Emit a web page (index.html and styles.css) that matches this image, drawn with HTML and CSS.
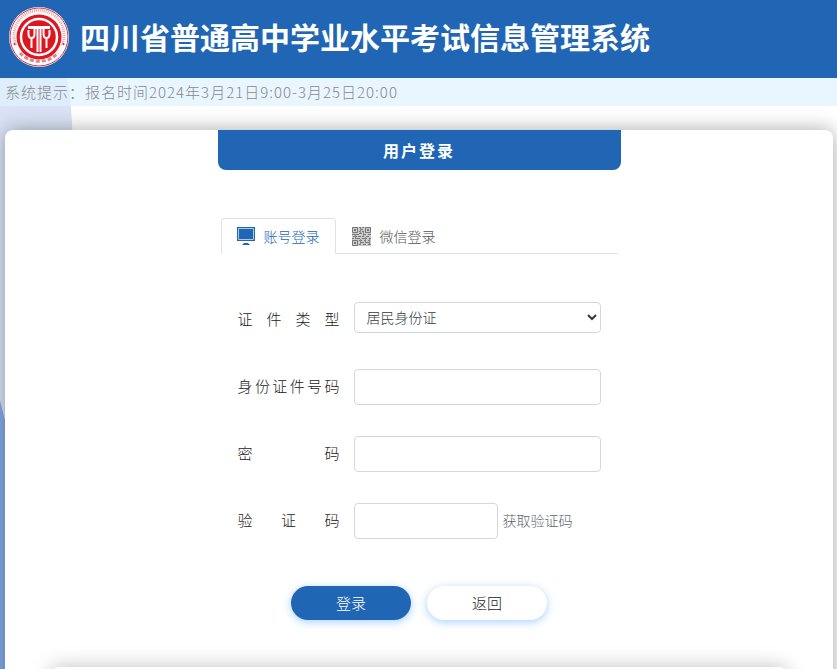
FILE: index.html
```html
<!DOCTYPE html>
<html lang="zh-CN">
<head>
    <meta charset="UTF-8">
    <meta name="viewport" content="width=device-width, initial-scale=1.0">
    <title>四川省普通高中学业水平考试信息管理系统</title>
    <link rel="stylesheet" href="styles.css">
</head>
<body>
    <svg class="bg-shape" width="80" height="900" viewBox="0 0 80 900" aria-hidden="true">
        <path d="M0 0H67Q74 30 74 140V900H0Z" fill="#dae3f6"/>
        <path d="M0 322Q3 335 10 362V900H0Z" fill="#84abea"/>
    </svg>
    <header class="header">
        <svg class="logo" width="60" height="60" viewBox="0 0 60 60" role="img" aria-label="四川省教育考试院">
            <circle cx="30" cy="30" r="30" fill="#fff"/>
            <circle cx="30" cy="30" r="29" fill="none" stroke="#e0303a" stroke-width="1"/>
            <path d="M7 38A25 25 0 1 1 53 38" fill="none" stroke="#eca0a6" stroke-width="3" stroke-dasharray="1 1"/>
            <path d="M11 46A26 26 0 0 0 49 46" fill="none" stroke="#e2848b" stroke-width="3" stroke-dasharray="4 2"/>
            <circle cx="5.500" cy="37" r="1" fill="#d9202b"/>
            <circle cx="54.500" cy="37" r="1" fill="#d9202b"/>
            <circle cx="30" cy="30" r="22.500" fill="#dd1620"/>
            <circle cx="30" cy="30" r="18" fill="none" stroke="#fff" stroke-width="2.500"/>
            <path d="M19 20.500H41" fill="none" stroke="#fff" stroke-width="3"/>
            <path d="M19.500 23V27Q19.500 31 22.500 31Q25.500 31 25.500 27V21M22.500 31V41M40.500 23V27Q40.500 31 37.500 31Q34.500 31 34.500 27V21M37.500 31V41M28.500 21V45M31.500 21V45" fill="none" stroke="#fff" stroke-width="2"/>
        </svg>
        <h1>四川省普通高中学业水平考试信息管理系统</h1>
    </header>
    <div class="notice">系统提示：报名时间2024年3月21日9:00-3月25日20:00</div>
    <main class="card">
        <div class="login">
            <h2>用户登录</h2>
            <nav class="tabs">
                <a href="#account" class="tab active">
                    <svg width="18" height="18" viewBox="0 0 18 18" aria-hidden="true">
                        <path d="M0 0H18V14H0Z" fill="#2066b5"/>
                        <path d="M1.500 1.500H16.500V12.500H1.500Z" fill="none" stroke="#a9c8ea" stroke-width="1"/>
                        <path d="M7 16H11L13 18H5Z" fill="#2066b5"/>
                    </svg>
                    账号登录
                </a>
                <a href="#wechat" class="tab">
                    <svg width="19" height="19" viewBox="0 0 19 19" aria-hidden="true" fill="none" stroke="#777">
                        <path d="M0 0H19V19H0Z" fill="#ccc" stroke="none"/>
                        <path d="M.5 .5H5.500V5.500H.5ZM13.500 .5H18.500V5.500H13.500ZM.5 13.500H5.500V18.500H.5Z"/>
                        <path d="M2 3H4M15 3H17M2 16H4" stroke-width="2"/>
                        <path d="M7 .5H9M10 .5H12M8 2.500H11M7 4.500H8M10 4.500H12M7 6.500H10M0 7.500H3M4 7.500H7M11 7.500H14M16 7.500H19M1 9.500H5M6 9.500H9M10 9.500H12M14 9.500H17M0 11.500H2M4 11.500H8M10 11.500H15M17 11.500H19M7 13.500H10M12 13.500H14M16 13.500H18M8 15.500H12M14 15.500H17M7 17.500H9M11 17.500H14M16 17.500H19"/>
                        <path d="M8.500 1V6M11.500 5V9M3.500 7V12M13.500 10V16M8.500 12V18M17.500 12V17" stroke="#888"/>
                    </svg>
                    微信登录
                </a>
            </nav>
            <form class="form">
                <div class="row">
                    <label for="idType">证件类型</label>
                    <select id="idType">
                        <option>居民身份证</option>
                    </select>
                </div>
                <div class="row">
                    <label for="idNumber">身份证件号码</label>
                    <input type="text" id="idNumber">
                </div>
                <div class="row">
                    <label for="password">密码</label>
                    <input type="password" id="password">
                </div>
                <div class="row">
                    <label for="captcha">验证码</label>
                    <input type="text" id="captcha" class="short">
                    <a href="#captcha" class="get-code">获取验证码</a>
                </div>
                <div class="buttons">
                    <button type="submit" class="btn primary">登录</button>
                    <button type="button" class="btn">返回</button>
                </div>
            </form>
        </div>
        <div class="panel"></div>
    </main>
</body>
</html>
```
FILE: styles.css
```css
* {
    box-sizing: border-box;
}
html {
    scrollbar-width: none;
}
body {
    position: relative;
    margin: 0;
    background: #fff;
    color: #222;
    font-family: "Noto Sans CJK SC", sans-serif;
    font-size: 15px;
    font-weight: 300;
    overflow-x: hidden;
}
.bg-shape {
    position: absolute;
    top: 78px;
    left: 0;
    z-index: -1;
}
.header {
    display: flex;
    align-items: center;
    gap: 11px;
    min-height: 78px;
    padding: 0 9px 4px;
    background: #2066b5;
    color: #fff;
}
.logo {
    flex: none;
}
h1 {
    margin: 0;
    padding-bottom: 2px;
    font-size: 30px;
    line-height: 40px;
}
.notice {
    padding: 0 5px;
    background: rgba(225, 242, 255, 0.7);
    color: #888;
    line-height: 28px;
    letter-spacing: 1px;
}
.card {
    margin: 24px 4px 0 5px;
    background: #fff;
    border-radius: 8px;
    box-shadow: 0 0 20px rgba(0, 0, 0, 0.35);
}
.login {
    max-width: 403px;
    margin: 0 auto;
}
h2 {
    margin: 0;
    background: #2066b5;
    border-radius: 0 0 8px 8px;
    color: #fff;
    font-size: 16px;
    line-height: 40px;
    letter-spacing: 2px;
    text-align: center;
}
.tabs {
    display: flex;
    margin: 48px 3px 0;
    border-bottom: 1px solid #dee2e6;
}
.tab {
    display: flex;
    align-items: center;
    gap: 9px;
    height: 36px;
    margin-bottom: -1px;
    padding: 0 15px;
    border: 1px solid transparent;
    border-radius: 4px 4px 0 0;
    color: #555;
    font-size: 14px;
    text-decoration: none;
}
.tab.active {
    background: #fff;
    border-color: #dee2e6 #dee2e6 #fff;
    color: #2066b5;
}
.form {
    display: grid;
    gap: 31px;
    padding: 48px 20px 47px;
}
.row {
    display: flex;
    min-height: 36px;
}
.row label {
    flex: none;
    width: 102px;
    margin-right: 14px;
    line-height: 34px;
    text-align-last: justify;
}
.row input,
.row select {
    flex: 1;
    min-width: 0;
    background: #fff;
    border: 1px solid #d4d8dc;
    border-radius: 4px;
    color: #343a40;
    font-family: inherit;
    font-size: 14px;
    font-weight: inherit;
}
.row input {
    height: 36px;
    padding: 0 12px;
}
.row select {
    height: 31px;
    padding: 0 0 2px 8px;
}
.row .short {
    flex: 0 1 144px;
}
.get-code {
    margin-left: 5px;
    color: #5c656d;
    font-size: 14px;
    line-height: 34px;
    text-decoration: none;
}
.buttons {
    display: flex;
    justify-content: center;
    gap: 16px;
    margin-top: 16px;
}
.btn {
    width: 120px;
    height: 34px;
    padding: 0 0 2px;
    background: #fff;
    border: none;
    border-radius: 17px;
    box-shadow: 0 2px 8px rgba(30, 140, 255, 0.4);
    color: #222;
    font-family: inherit;
    font-size: 15px;
    font-weight: inherit;
    cursor: pointer;
}
.btn.primary {
    background: #2066b5;
    color: #fff;
}
.panel {
    min-height: 60px;
    margin: 0 46px;
    border-radius: 8px;
    box-shadow: 0 0 20px rgba(0, 0, 0, 0.25);
}
```
